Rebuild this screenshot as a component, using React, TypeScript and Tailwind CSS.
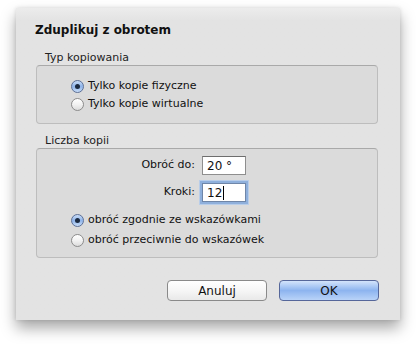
import React from "react";

const font = { fontFamily: '"DejaVu Sans", "Noto Sans", sans-serif' };

function Radio({ checked, label }: { checked?: boolean; label: string }) {
  return (
    <div className="flex h-[18px] items-center">
      <div
        className={
          checked
            ? "flex h-[13px] w-[13px] items-center justify-center rounded-full border border-[#5c6f96] bg-gradient-to-b from-[#c9dcf6] via-[#8fb4ea] to-[#c7dcf7]"
            : "h-[13px] w-[13px] rounded-full border border-[#8c8c8c] bg-gradient-to-b from-[#ffffff] via-[#f2f2f2] to-[#dcdcdc]"
        }
      >
        {checked && <div className="h-[5px] w-[5px] rounded-full bg-[#1b2a40]" />}
      </div>
      <span className="ml-[4px] text-[11px] leading-[18px] text-[#111]">{label}</span>
    </div>
  );
}

export default function App() {
  return (
    <div className="h-[344px] w-[416px] bg-white pl-[16px] pt-[8px]" style={font}>
      <div className="flex h-[312px] w-[384px] flex-col bg-gradient-to-b from-[#ececec] to-[#e3e3e3] to-[4%] shadow-[0_8px_14px_rgba(0,0,0,0.35),0_0_4px_rgba(0,0,0,0.12)]">
        <div className="ml-[19px] mt-[13px] h-[18px] text-[12px] font-bold leading-[18px] text-[#111]">
          Zduplikuj z obrotem
        </div>
        <div className="ml-[29px] mt-[12px] h-[14px] text-[11px] leading-[14px] text-[#222]">
          Typ kopiowania
        </div>
        <div className="ml-[20px] h-[59px] w-[342px] rounded-[4px] border border-[#bdbdbd] border-t-[#a9a9a9] bg-[#dbdbdb] pl-[34px] pt-[11px]">
          <Radio checked label="Tylko kopie fizyczne" />
          <Radio label="Tylko kopie wirtualne" />
        </div>
        <div className="ml-[29px] mt-[10px] h-[14px] text-[11px] leading-[14px] text-[#222]">
          Liczba kopii
        </div>
        <div className="ml-[20px] flex h-[110px] w-[342px] flex-col rounded-[4px] border border-[#bdbdbd] border-t-[#a9a9a9] bg-[#dbdbdb] pt-[7px]">
          <div className="flex items-center">
            <div className="w-[158px] text-right text-[11px] text-[#111]">Obróć do:</div>
            <div className="ml-[7px] flex h-[19px] w-[44px] items-center border border-[#8e8e8e] border-t-[#6e6e6e] bg-white pl-[4px] text-[12px] text-[#111]">
              20 °
            </div>
          </div>
          <div className="mt-[8px] flex items-center">
            <div className="w-[158px] text-right text-[11px] text-[#111]">Kroki:</div>
            <div className="ml-[7px] flex h-[19px] w-[44px] items-center border border-[#6f86a8] bg-white pl-[4px] text-[12px] text-[#111] shadow-[0_0_0_2px_#8fb0dc,0_0_0_3px_#b8cde9]">
              12<span className="ml-[1px] inline-block h-[14px] w-[1px] bg-black" />
            </div>
          </div>
          <div className="ml-[34px] mt-[9px] flex flex-col gap-[2px]">
            <Radio checked label="obróć zgodnie ze wskazówkami" />
            <Radio label="obróć przeciwnie do wskazówek" />
          </div>
        </div>
        <div className="mr-[21px] mt-[22px] flex justify-end gap-[12px]">
          <div className="flex h-[21px] w-[100px] items-center justify-center rounded-[4px] border border-[#8a8a8a] bg-gradient-to-b from-[#ffffff] via-[#f6f6f6] to-[#e9e9e9] text-[12px] text-[#111]">
            Anuluj
          </div>
          <div className="flex h-[21px] w-[100px] items-center justify-center rounded-[4px] border border-[#56679a] bg-gradient-to-b from-[#d4e4fb] via-[#8db4ef] to-[#b9d3f8] text-[12px] text-[#111]">
            OK
          </div>
        </div>
      </div>
    </div>
  );
}
